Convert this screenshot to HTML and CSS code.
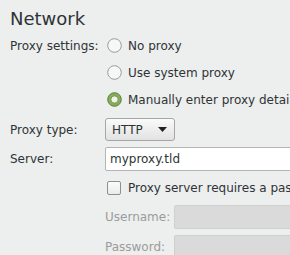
FILE: index.html
```html
<!DOCTYPE html>
<html lang="en">
<head>
  <meta charset="UTF-8" />
  <title>Network</title>
  <link rel="stylesheet" href="styles.css">
</head>
<body>

  <div class="prefs">
    <h1>Network</h1>

    <div class="form">
      <div class="label top">Proxy settings:</div>
      <div class="radios">
        <div class="radio">
          <svg width="15" height="15" viewBox="0 0 15 15"><circle cx="7.5" cy="7.5" r="6.8" fill="#f7f7f7" stroke="#9a9a9a"/></svg>
          <span>No proxy</span>
        </div>
        <div class="radio">
          <svg width="15" height="15" viewBox="0 0 15 15"><circle cx="7.5" cy="7.5" r="6.8" fill="#f7f7f7" stroke="#9a9a9a"/></svg>
          <span>Use system proxy</span>
        </div>
        <div class="radio">
          <svg width="15" height="15" viewBox="0 0 15 15"><circle cx="7.5" cy="7.5" r="6.8" fill="#86ad5c" stroke="#5f7f3c"/><circle cx="7.5" cy="7.5" r="3.6" fill="#eef3e4" stroke="#6f9147" stroke-width="0.8"/></svg>
          <span>Manually enter proxy details</span>
        </div>
      </div>

      <div class="label">Proxy type:</div>
      <div class="cell">
        <div class="select">
          <span>HTTP</span>
          <svg width="9" height="5" viewBox="0 0 9 5"><path d="M0 0h9L4.5 5z" fill="#222"/></svg>
        </div>
      </div>

      <div class="label">Server:</div>
      <div class="cell">
        <div class="entry">myproxy.tld</div>
      </div>

      <div></div>
      <div class="check">
        <span class="box"></span>
        <span>Proxy server requires a password</span>
      </div>

      <div></div>
      <div class="auth">
        <div class="label dim">Username:</div>
        <div class="entry off"></div>
        <div class="label dim">Password:</div>
        <div class="entry off"></div>
      </div>
    </div>
  </div>

</body>
</html>
```

FILE: styles.css
```css
* {
  box-sizing: border-box;
  margin: 0;
  padding: 0;
}

body {
  background: #edeeee;
  font-family: 'DejaVu Sans', sans-serif;
  font-size: 12px;
  color: #2e3436;
  overflow: hidden;
}

.prefs {
  width: 420px;
  padding: 8px 10px 0;
}

h1 {
  font-size: 18px;
  font-weight: normal;
  line-height: 22px;
  margin-bottom: 2px;
}

.form {
  display: grid;
  grid-template-columns: 95px 1fr;
  row-gap: 6px;
}

.label {
  display: flex;
  align-items: center;
}

.label.top {
  align-self: start;
  height: 27px;
}

.radios {
  display: flex;
  flex-direction: column;
  margin-bottom: -1px;
}

.radio {
  display: flex;
  align-items: center;
  gap: 6px;
  height: 27px;
  padding-left: 2px;
}

.select {
  width: 70px;
  height: 23px;
  display: flex;
  align-items: center;
  justify-content: space-between;
  padding: 0 7px 0 6px;
  border: 1px solid #a6a6a6;
  border-radius: 3px;
  background: linear-gradient(#fafafa, #e2e2e2);
}

.entry {
  height: 24px;
  display: flex;
  align-items: center;
  padding-left: 4px;
  background: #fff;
  border: 1px solid #b4b4b4;
  border-radius: 2px;
}

.check {
  display: flex;
  align-items: center;
  gap: 7px;
  height: 22px;
  padding-left: 2px;
}

.box {
  width: 14px;
  height: 14px;
  border: 1px solid #8e8e8e;
  border-radius: 2px;
  background: linear-gradient(#fbfbfb, #ebebeb);
}

.auth {
  display: grid;
  grid-template-columns: 69px 1fr;
  row-gap: 6px;
}

.dim {
  color: #9a9c9c;
}

.entry.off {
  background: #dadada;
  border-color: #cfcfcf;
}
```
